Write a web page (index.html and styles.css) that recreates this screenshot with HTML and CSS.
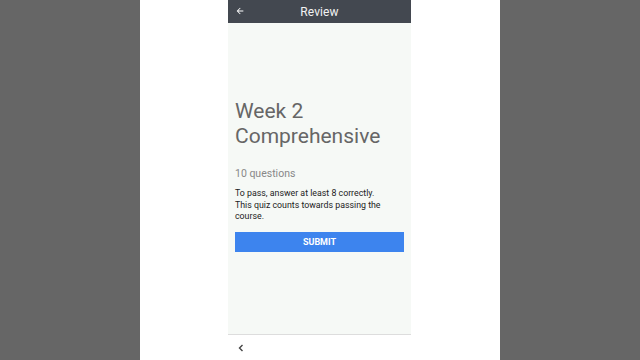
FILE: index.html
```html
<!DOCTYPE html>
<html>
<head>
<meta charset="utf-8">
<link rel="stylesheet" href="styles.css">
</head>
<body>
<div class="stage">
  <div class="side"></div>
  <div class="sheet">
    <div class="phone">
      <header class="topbar">
        <svg class="back" width="10" height="10" viewBox="0 0 24 24"><path d="M20 11H7.83l5.59-5.59L12 4l-8 8 8 8 1.41-1.41L7.83 13H20v-2z" fill="#fff"/></svg>
        <span class="title">Review</span>
      </header>
      <main class="content">
        <h1 class="quiz-title">Week 2<br>Comprehensive</h1>
        <p class="count">10 questions</p>
        <p class="info">To pass, answer at least 8 correctly. This quiz counts towards passing the course.</p>
        <button class="submit">SUBMIT</button>
      </main>
      <footer class="navbar"><svg width="6" height="8" viewBox="0 0 6 8"><path d="M4.5 1L1.5 4l3 3" fill="none" stroke="#444" stroke-width="1.4"/></svg></footer>
    </div>
  </div>
  <div class="side"></div>
</div>
</body>
</html>
```
FILE: styles.css
```css
html, body { margin: 0; padding: 0; }
body { background: #666; font-family: Roboto, "Liberation Sans", sans-serif; }
.stage { display: flex; width: 640px; height: 360px; overflow: hidden; }
.side { width: 140px; background: #666; flex: none; }
.sheet { width: 360px; background: #fff; flex: none; padding-left: 88px; box-sizing: border-box; }
.phone { width: 183px; height: 360px; display: flex; flex-direction: column; }
.topbar { height: 23px; background: #434850; position: relative; display: flex; align-items: center; justify-content: center; flex: none; }
.back { position: absolute; left: 7px; top: 6px; }
.title { color: #f2f2f2; font-size: 12px; letter-spacing: 0.1px; }
.content { flex: 1; background: #f6f9f6; padding: 76px 7px 0 7px; box-sizing: border-box; }
.quiz-title { margin: 0; font-weight: 400; font-size: 21px; line-height: 25px; color: #666; }
.count { margin: 18px 0 0; font-size: 10.5px; line-height: 14px; color: #888; }
.info { margin: 7px 0 0; max-width: 150px; font-size: 8.8px; line-height: 11.5px; color: #222; }
.submit { display: block; width: 100%; height: 20px; margin-top: 9.5px; border: none; background: #3d84ee; color: #fff; font-family: Roboto, "Liberation Sans", sans-serif; font-weight: 700; font-size: 9px; padding: 0; }
.navbar { height: 25px; flex: none; background: #fff; border-top: 1px solid #ddd; display: flex; align-items: center; padding-left: 10px; }
```
